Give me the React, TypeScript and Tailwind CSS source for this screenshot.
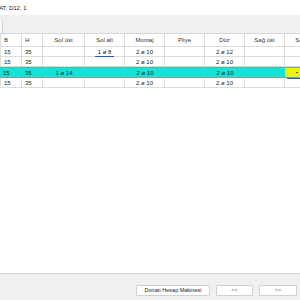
const cols = [
  { key: 'b', label: 'B', w: 'w-[22px]', left: true },
  { key: 'h', label: 'H', w: 'w-[21px]', left: true },
  { key: 'solUst', label: 'Sol üst', w: 'w-[42px]' },
  { key: 'solAlt', label: 'Sol alt', w: 'w-[40px]' },
  { key: 'montaj', label: 'Montaj', w: 'w-[40px]' },
  { key: 'pliye', label: 'Pliye', w: 'w-[40px]' },
  { key: 'duz', label: 'Düz', w: 'w-[40px]' },
  { key: 'sagUst', label: 'Sağ üst', w: 'w-[40px]' },
  { key: 'sagAlt', label: 'Sağ alt', w: 'w-[40px]' },
];

type Row = Record<string, string>;

const rows: Row[] = [
  { b: '15', h: '35', solUst: '', solAlt: '1 ø 8', montaj: '2 ø 10', pliye: '', duz: '2 ø 12', sagUst: '', sagAlt: '' },
  { b: '15', h: '35', solUst: '', solAlt: '', montaj: '2 ø 10', pliye: '', duz: '2 ø 10', sagUst: '', sagAlt: '' },
  { b: '15', h: '35', solUst: '1 ø 14', solAlt: '', montaj: '2 ø 10', pliye: '', duz: '2 ø 10', sagUst: '', sagAlt: '' },
  { b: '15', h: '35', solUst: '', solAlt: '', montaj: '2 ø 10', pliye: '', duz: '2 ø 10', sagUst: '', sagAlt: '' },
];

const selected = 2;

export default function App() {
  return (
    <div
      className="w-[300px] h-[300px] overflow-hidden bg-white flex flex-col text-[#1b1b1b] leading-none"
      style={{ fontFamily: '"Liberation Sans", Arial, sans-serif' }}
    >
      {/* title */}
      <div className="h-[15px] flex items-center text-[6px] shrink-0">
        <span className="-ml-[1px]">AT, D12, 1</span>
      </div>

      {/* tab strip */}
      <div className="h-[18px] bg-[#f0f0f0] flex flex-col shrink-0">
        <div className="h-[5px]" />
        <div className="flex-1 flex">
          <div className="w-[3px] bg-[#f7f7f7] border-r border-[#d4d4d4]" />
        </div>
      </div>
      <div className="h-px bg-[#d6d6d6] shrink-0" />

      {/* grid */}
      <div className="h-[239px] shrink-0 overflow-hidden">
        <div className="w-max text-[6px]">
          <div className="flex h-[13px] border-b border-[#dcdcdc] text-[#333]">
            {cols.map((c, i) => (
              <div
                key={c.key}
                className={`${c.w} shrink-0 border-r border-[#dcdcdc] ${i === 0 ? 'border-l' : ''} flex items-center ${
                  c.left ? 'justify-start pl-[3px]' : 'justify-center'
                }`}
              >
                {c.label}
              </div>
            ))}
          </div>
          {rows.map((r, ri) => {
            const isSel = ri === selected;
            return (
              <div
                key={ri}
                className={`flex ${
                  isSel ? 'bg-[#12e2da] border-y border-[#6cae8e] h-[11px]' : 'border-b border-[#dcdcdc] h-[10px]'
                }`}
              >
                {cols.map((c, i) => {
                  const editing = isSel && c.key === 'sagAlt';
                  return (
                    <div
                      key={c.key}
                      className={`${c.w} shrink-0 relative flex items-center ${
                        isSel ? '' : 'border-r border-[#dcdcdc]'
                      } ${i === 0 && !isSel ? 'border-l' : ''} ${
                        c.left ? 'justify-start pl-[3px]' : 'justify-center'
                      } ${editing ? 'bg-[#eef20c]' : ''}`}
                    >
                      {r[c.key]}
                      {ri === 0 && c.key === 'solAlt' && (
                        <span className="absolute left-[10px] right-[10px] bottom-[-1px] h-px bg-[#1f5bd6]" />
                      )}
                      {editing && (
                        <>
                          <span className="absolute left-[11px] top-[4px] w-[2px] h-px bg-[#444]" />
                          <span className="absolute left-[2px] right-0 bottom-[-2px] h-px bg-[#1f5bd6]" />
                        </>
                      )}
                    </div>
                  );
                })}
              </div>
            );
          })}
        </div>
      </div>

      {/* footer */}
      <div className="h-px bg-[#cfcfcf] shrink-0" />
      <div className="h-[26px] bg-[#f0f0f0] shrink-0 flex items-start justify-end pt-[11px] pr-[3px] gap-[6px] text-[5.5px]">
        <button className="h-[11px] w-[74px] bg-white border border-[#d0d0d0] rounded-[1px] flex items-center justify-center text-[#222]">
          Donatı Hesap Makinesi
        </button>
        <button className="h-[11px] w-[37px] bg-white border border-[#d0d0d0] rounded-[1px] flex items-center justify-center text-[#666]">
          &lt;&lt;
        </button>
        <button className="h-[11px] w-[38px] bg-white border border-[#d0d0d0] rounded-[1px] flex items-center justify-center text-[#666]">
          &gt;&gt;
        </button>
      </div>
    </div>
  );
}
